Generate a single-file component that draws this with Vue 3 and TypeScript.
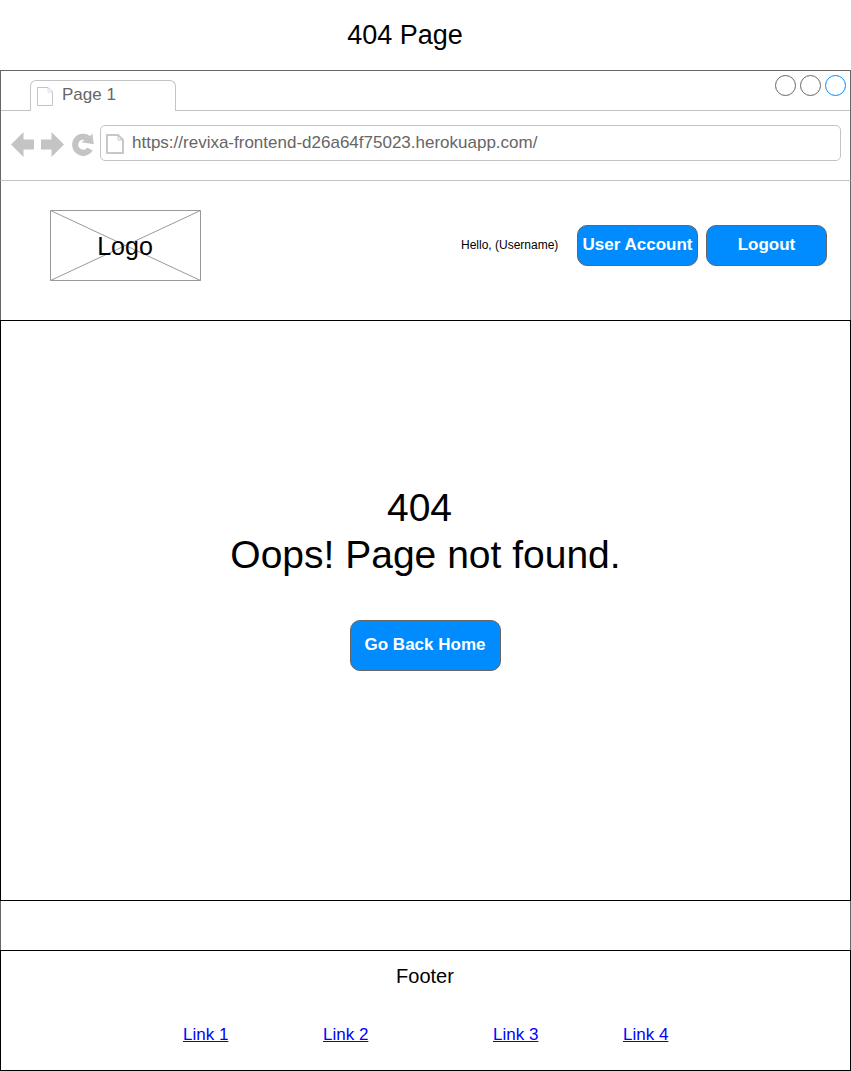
<script setup lang="ts">
import { ref } from 'vue'

interface FooterLink {
  label: string
  left: number
}

const address = ref('https://revixa-frontend-d26a64f75023.herokuapp.com/')
const links: FooterLink[] = [
  { label: 'Link 1', left: 182 },
  { label: 'Link 2', left: 95 },
  { label: 'Link 3', left: 125 },
  { label: 'Link 4', left: 85 },
]
</script>

<template>
  <div class="board">
    <h1 class="board-title">404 Page</h1>
    <div class="window">
      <div class="tab-bar">
        <div class="tab-lead"></div>
        <div class="tab">
          <svg class="tab-icon" width="18" height="20" viewBox="0 0 18 20">
            <path d="M1.5 1.5H12L16.5 6V19.5H1.5Z" />
            <path class="fold" d="M12 1.5V6H16.5" />
          </svg>
          <span>Page 1</span>
        </div>
        <div class="controls">
          <i class="dot"></i><i class="dot"></i><i class="dot blue"></i>
        </div>
      </div>
      <div class="address-bar">
        <svg class="nav-icons" width="99" height="69" viewBox="1 111 99 69">
          <path d="M11 144.5L23.5 132V139.5H34V149.5H23.5V157Z" />
          <path d="M64 144.5L51.5 132V139.5H41V149.5H51.5V157Z" />
          <path d="M92.7 150.6A11.1 11.1 0 1 1 90 136L92.3 133.6L93.8 144.3L81.5 142.3L84.6 140A4.9 4.9 0 1 0 87.3 147.4Z" />
        </svg>
        <div class="address">
          <svg class="page-icon" width="20" height="22" viewBox="0 0 20 22">
            <path d="M2 2H13L18 7V20H2Z" />
            <path class="fold" d="M13 2V7H18" />
          </svg>
          <span>{{ address }}</span>
        </div>
      </div>
      <header class="header">
        <div class="logo">
          <svg width="151" height="71" viewBox="0 0 151 71">
            <path d="M.5.5H150.5V70.5H.5ZM.5.5L150.5 70.5M150.5.5L.5 70.5" />
          </svg>
          <span>Logo</span>
        </div>
        <span class="hello">Hello, (Username)</span>
        <button class="btn">User Account</button>
        <button class="btn">Logout</button>
      </header>
      <main class="content">
        <p class="code">404</p>
        <p class="message">Oops! Page not found.</p>
        <button class="btn home">Go Back Home</button>
      </main>
      <div class="gap"></div>
      <footer class="footer">
        <p class="footer-title">Footer</p>
        <nav class="links">
          <a v-for="link in links" :key="link.label" href="#" :style="{ marginLeft: link.left + 'px' }">{{ link.label }}</a>
        </nav>
      </footer>
    </div>
  </div>
</template>

<style>
body {
  margin: 0;
  background: #fff;
}
</style>

<style scoped>
.board {
  width: 851px;
  height: 1071px;
  overflow: hidden;
  display: flex;
  flex-direction: column;
  font-family: "Liberation Sans", Arial, sans-serif;
  color: #000;
}
.board * {
  box-sizing: border-box;
}
.board-title {
  margin: 0;
  height: 70px;
  padding-right: 41px;
  font-size: 27px;
  font-weight: 400;
  line-height: 71px;
  text-align: center;
}
.window {
  display: flex;
  flex-direction: column;
  height: 1001px;
}
.tab-bar,
.address-bar,
.header,
.gap {
  border: 0 solid #666;
  border-width: 0 1px;
}
.tab-bar {
  display: flex;
  height: 41px;
  border-top-width: 1px;
}
.tab-lead {
  width: 29px;
  border-bottom: 1px solid #c4c4c4;
}
.tab {
  display: flex;
  width: 146px;
  height: 31px;
  margin-top: 9px;
  padding-left: 5px;
  border: 1px solid #c4c4c4;
  border-bottom: 0;
  border-radius: 6px 6px 0 0;
  font-size: 17px;
  line-height: 27px;
  color: #666;
}
.tab-icon {
  margin: 5px 8px 0 0;
  fill: none;
  stroke: #c4c4c4;
}
.tab-icon .fold {
  stroke: #dedede;
}
.controls {
  flex: 1;
  display: flex;
  justify-content: flex-end;
  gap: 4px;
  padding: 4px 4px 0 0;
  border-bottom: 1px solid #c4c4c4;
}
.dot {
  width: 21px;
  height: 21px;
  border: 1px solid #666;
  border-radius: 50%;
}
.dot.blue {
  border-color: #008cff;
}
.address-bar {
  display: flex;
  height: 70px;
  border-bottom: 1px solid #c4c4c4;
}
.nav-icons {
  fill: #c4c4c4;
}
.address {
  display: flex;
  width: 741px;
  height: 36px;
  margin-top: 14px;
  padding-left: 4px;
  border: 1px solid #c4c4c4;
  border-radius: 5px;
  font-size: 17px;
  line-height: 33px;
  color: #666;
}
.page-icon {
  margin: 7px 7px 0 0;
  fill: none;
  stroke: #c8c8c8;
  stroke-width: 2;
}
.page-icon .fold {
  stroke-width: 1;
}
.header {
  display: flex;
  height: 139px;
}
.logo {
  display: grid;
  width: 151px;
  height: 71px;
  margin: 29px 260px 0 49px;
}
.logo > * {
  grid-area: 1 / 1;
}
.logo svg {
  fill: none;
  stroke: #999;
}
.logo span {
  z-index: 1;
  padding-right: 1px;
  font-size: 25px;
  line-height: 73px;
  text-align: center;
}
.hello {
  width: 116px;
  margin-top: 57px;
  font-size: 12px;
  line-height: 14px;
}
.btn {
  width: 121px;
  height: 41px;
  margin: 44px 8px 0 0;
  padding: 0 0 2px;
  border: 1px solid #666;
  border-radius: 10px;
  background: #008cff;
  color: #fff;
  font: bold 17px "Liberation Sans", Arial, sans-serif;
  white-space: nowrap;
}
.content {
  display: flex;
  flex-direction: column;
  align-items: center;
  height: 581px;
  padding-top: 163px;
  border: 1px solid #000;
}
.code,
.message {
  margin: 0;
  font-size: 39px;
  line-height: 47px;
}
.code {
  padding-right: 12px;
}
.btn.home {
  width: 151px;
  height: 51px;
  margin: 42px 0 0;
  padding-right: 1px;
}
.gap {
  height: 49px;
}
.footer {
  height: 121px;
  border: 1px solid #000;
}
.footer-title {
  margin: 0;
  padding: 13px 1px 0 0;
  font-size: 20px;
  line-height: 24px;
  text-align: center;
}
.links {
  display: flex;
  margin-top: 37px;
  font-size: 17px;
  line-height: 20px;
}
.links a {
  width: 45px;
  color: #00f;
  white-space: nowrap;
}
</style>
